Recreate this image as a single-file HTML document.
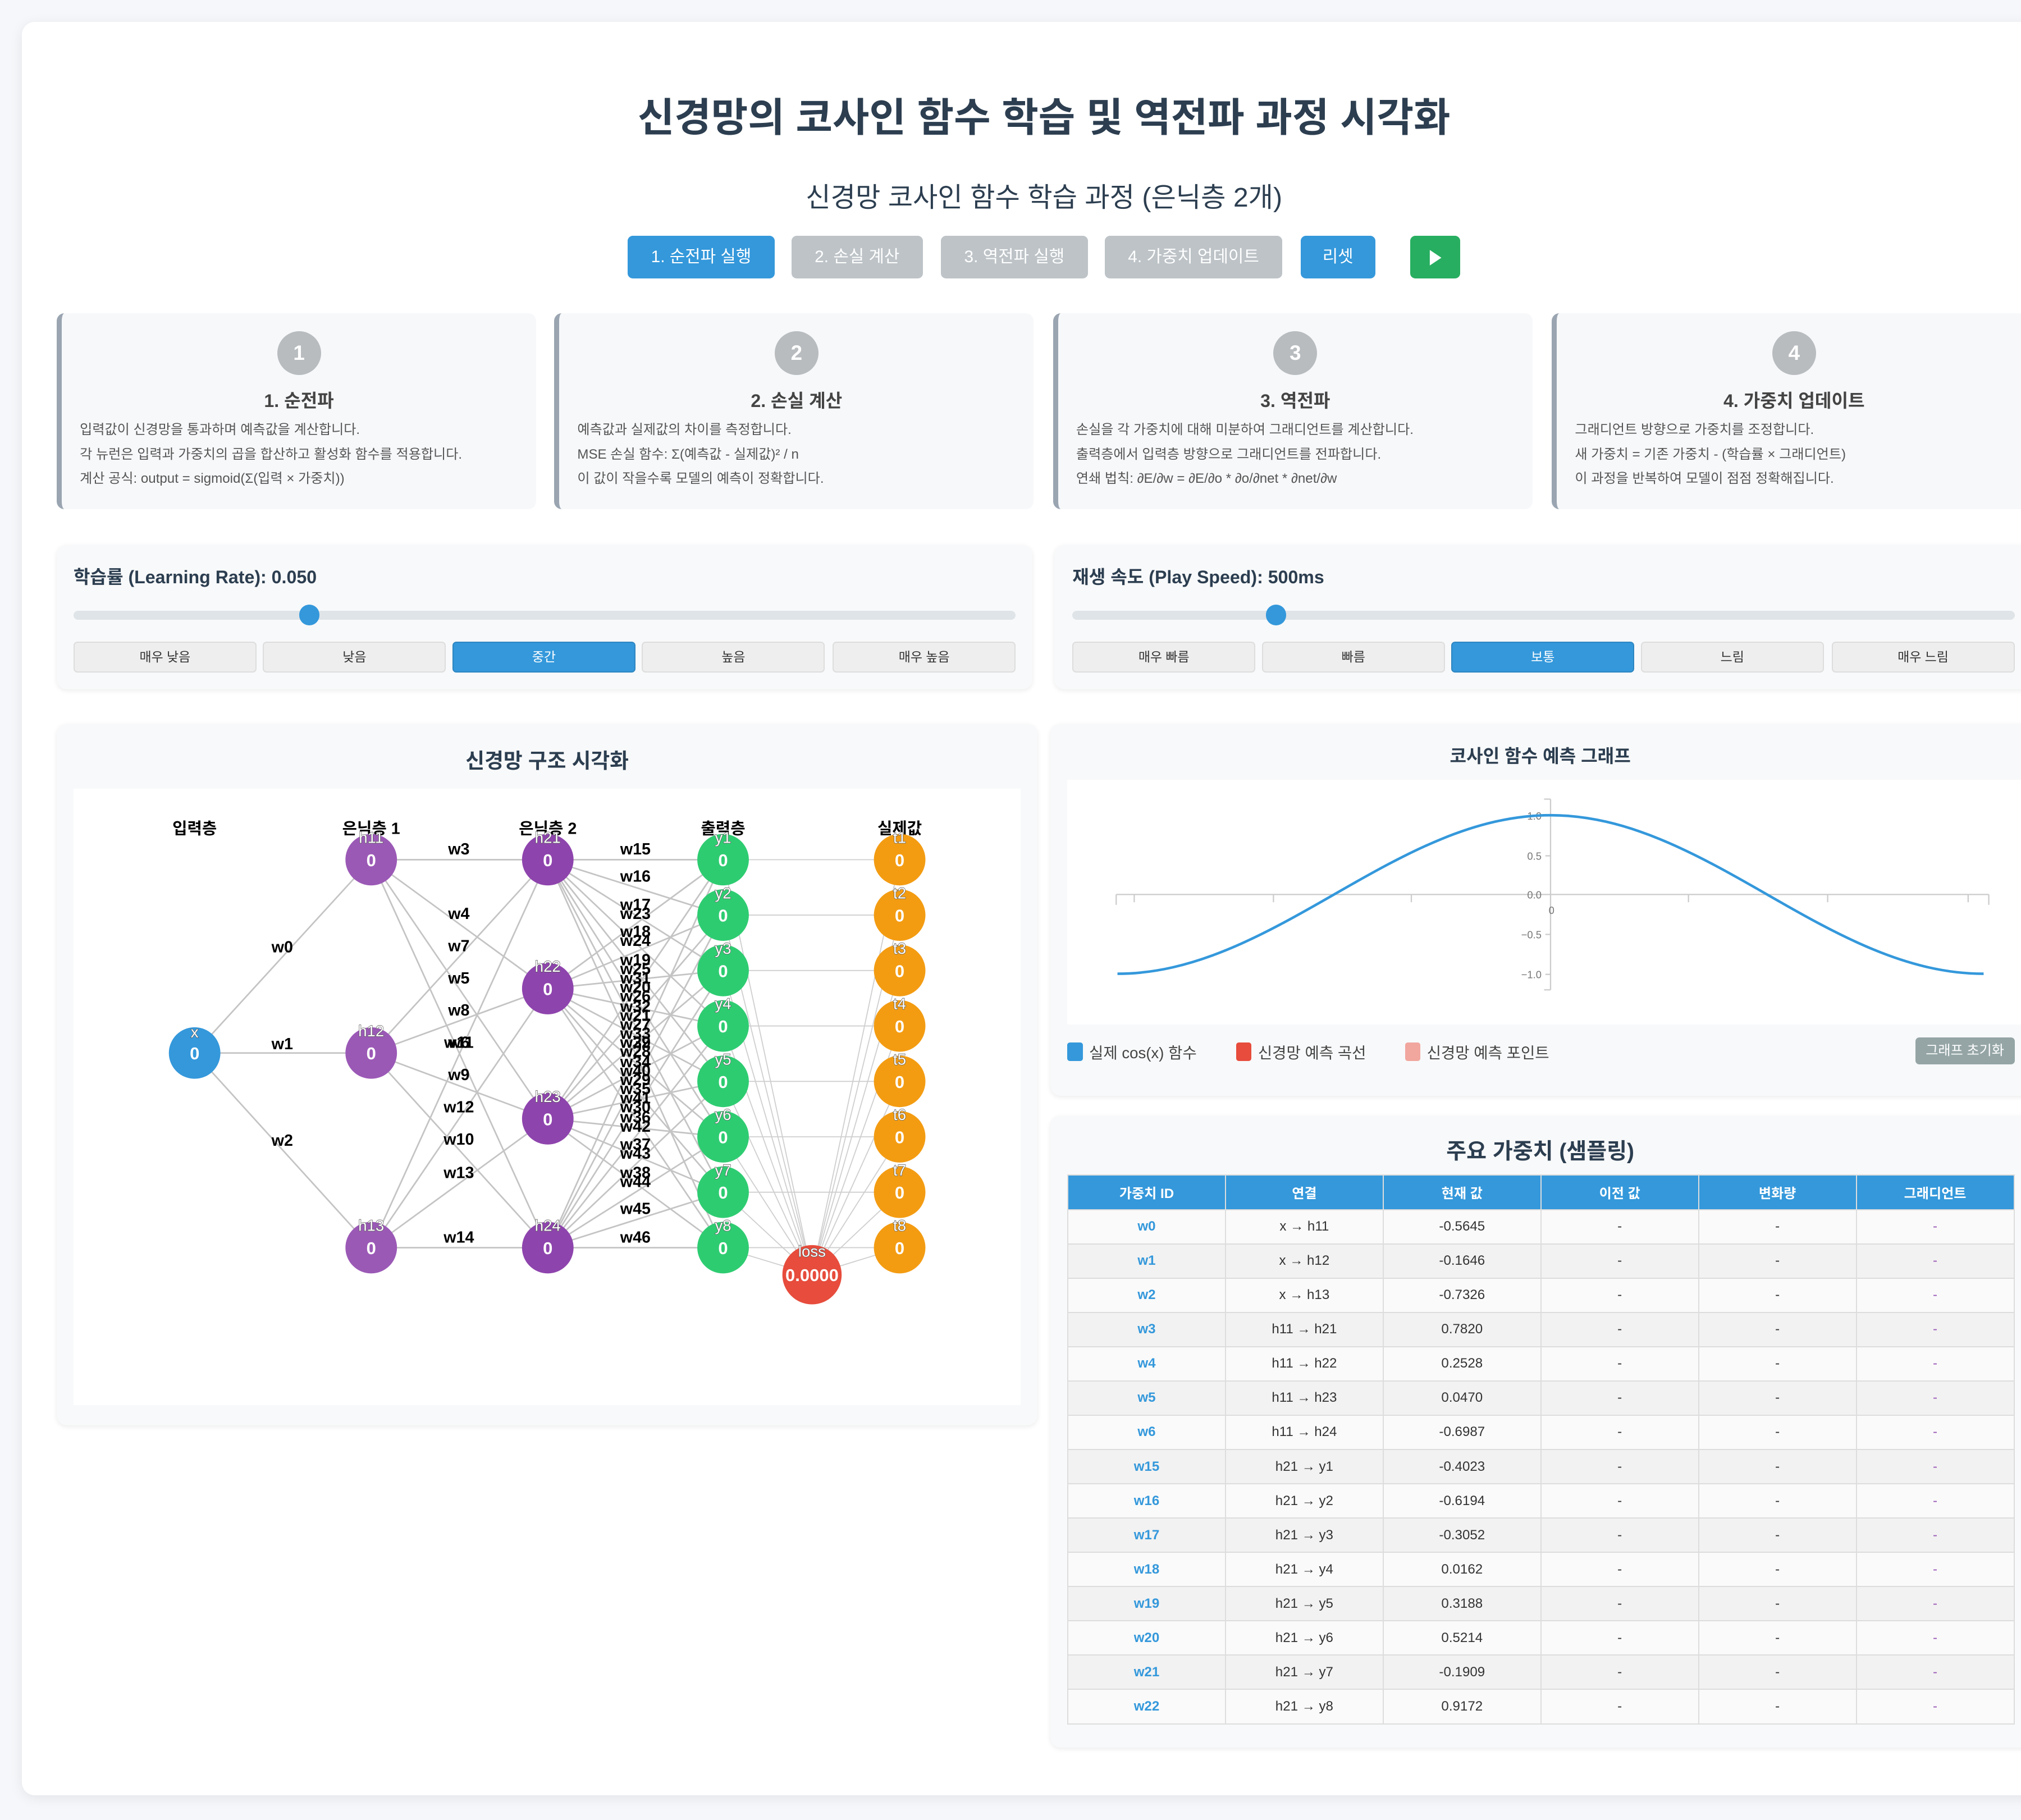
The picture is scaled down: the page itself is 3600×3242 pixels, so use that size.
<!DOCTYPE html>
<html><head><meta charset="utf-8">
<style>
html{zoom:2.29592}
*{box-sizing:border-box;margin:0;padding:0}
body{width:1568px;height:1412px;overflow:hidden;background:#f5f7fa;font-family:"Liberation Sans","Noto Sans CJK KR",sans-serif;color:#2c3e50;position:relative}
.abs{position:absolute}
.wrap{left:17px;top:17px;width:1600px;height:1376px;background:#fff;border-radius:10px;box-shadow:0 2px 10px rgba(0,0,0,.08)}
.c{text-align:center}
.btn{top:183px;height:33px;border-radius:4px;color:#fff;font-size:13px;line-height:33px;text-align:center}
.card{top:243px;width:372px;height:152px;background:#f7f8fa;border-left:4px solid #9aa5b1;border-radius:6px}
.num{position:absolute;left:50%;top:14px;width:34px;height:34px;margin-left:-17px;border-radius:50%;background:#b8bcbf;color:#fff;font-weight:bold;font-size:16px;line-height:34px;text-align:center}
.ct{position:absolute;top:57px;width:100%;text-align:center;font-weight:bold;font-size:14px;color:#444}
.cx{position:absolute;left:14px;top:81px;font-size:10.5px;line-height:19px;color:#555}
.panel{background:#f8f9fa;border-radius:8px;box-shadow:0 1px 4px rgba(0,0,0,.08)}
.lbl{font-weight:bold;font-size:14px;color:#2c3e50}
.track{height:7px;background:#dfe4e8;border-radius:4px}
.thumb{width:16px;height:16px;border-radius:50%;background:#3498db}
.sb{top:498px;width:142px;height:24px;background:#eeeeee;border:1px solid #ddd;border-radius:3px;font-size:10px;line-height:22px;text-align:center;color:#333}
.sb.on{background:#3498db;color:#fff;border-color:#2e86c1}
table{border-collapse:collapse;width:735px;font-size:10.5px;table-layout:fixed}
th{background:#3498db;color:#fff;height:27px;border:1px solid #ddd;font-weight:bold;font-size:10.5px}
td{height:26.6px;border:1px solid #ddd;text-align:center;color:#333}
tr:nth-child(odd) td{background:#f2f2f2}
tr:nth-child(even) td{background:#fafafa}
td.id{color:#3498db;font-weight:bold}
td.g{color:#9b59b6}
</style></head><body>
<div class="abs wrap"></div>
<div class="abs c" style="left:17px;width:1586px;top:66px;font-size:31px;font-weight:bold;color:#2c3e50">신경망의 코사인 함수 학습 및 역전파 과정 시각화</div>
<div class="abs c" style="left:17px;width:1586px;top:136px;font-size:21px;color:#2c3e50">신경망 코사인 함수 학습 과정 (은닉층 2개)</div>

<div class="abs btn" style="left:487px;width:114px;background:#3498db">1. 순전파 실행</div>
<div class="abs btn" style="left:614px;width:102px;background:#bdc3c7">2. 손실 계산</div>
<div class="abs btn" style="left:730px;width:114px;background:#bdc3c7">3. 역전파 실행</div>
<div class="abs btn" style="left:857px;width:138px;background:#bdc3c7">4. 가중치 업데이트</div>
<div class="abs btn" style="left:1009px;width:58px;background:#3498db">리셋</div>
<div class="abs btn" style="left:1094px;width:39px;background:#27ae60"><svg width="14" height="14" viewBox="0 0 14 14" style="margin-top:10px"><path d="M3 1 L12 7 L3 13 Z" fill="#fff"/></svg></div>

<div class="abs card" style="left:44px"><div class="num">1</div><div class="ct">1. 순전파</div><div class="cx">입력값이 신경망을 통과하며 예측값을 계산합니다.<br>각 뉴런은 입력과 가중치의 곱을 합산하고 활성화 함수를 적용합니다.<br>계산 공식: output = sigmoid(Σ(입력 × 가중치))</div></div>
<div class="abs card" style="left:430px"><div class="num">2</div><div class="ct">2. 손실 계산</div><div class="cx">예측값과 실제값의 차이를 측정합니다.<br>MSE 손실 함수: Σ(예측값 - 실제값)² / n<br>이 값이 작을수록 모델의 예측이 정확합니다.</div></div>
<div class="abs card" style="left:817px"><div class="num">3</div><div class="ct">3. 역전파</div><div class="cx">손실을 각 가중치에 대해 미분하여 그래디언트를 계산합니다.<br>출력층에서 입력층 방향으로 그래디언트를 전파합니다.<br>연쇄 법칙: ∂E/∂w = ∂E/∂o * ∂o/∂net * ∂net/∂w</div></div>
<div class="abs card" style="left:1204px"><div class="num">4</div><div class="ct">4. 가중치 업데이트</div><div class="cx">그래디언트 방향으로 가중치를 조정합니다.<br>새 가중치 = 기존 가중치 - (학습률 × 그래디언트)<br>이 과정을 반복하여 모델이 점점 정확해집니다.</div></div>

<div class="abs panel" style="left:44px;top:423px;width:757px;height:112px"></div>
<div class="abs lbl" style="left:57px;top:437px">학습률 (Learning Rate): 0.050</div>
<div class="abs track" style="left:57px;top:474px;width:731px"></div>
<div class="abs thumb" style="left:232px;top:469px"></div>
<div class="abs sb" style="left:57px">매우 낮음</div><div class="abs sb" style="left:204px">낮음</div><div class="abs sb on" style="left:351px">중간</div><div class="abs sb" style="left:498px">높음</div><div class="abs sb" style="left:646px">매우 높음</div>

<div class="abs panel" style="left:818px;top:423px;width:780px;height:112px"></div>
<div class="abs lbl" style="left:832px;top:437px">재생 속도 (Play Speed): 500ms</div>
<div class="abs track" style="left:832px;top:474px;width:731px"></div>
<div class="abs thumb" style="left:982px;top:469px"></div>
<div class="abs sb" style="left:832px">매우 빠름</div><div class="abs sb" style="left:979px">빠름</div><div class="abs sb on" style="left:1126px">보통</div><div class="abs sb" style="left:1273px">느림</div><div class="abs sb" style="left:1421px">매우 느림</div>

<div class="abs panel" style="left:44px;top:562px;width:761px;height:544px"></div>
<div class="abs c lbl" style="left:44px;width:761px;top:577px;font-size:16px">신경망 구조 시각화</div>
<div class="abs" style="left:57px;top:612px;width:735px;height:478px;background:#fff"></div>

<div class="abs panel" style="left:815px;top:562px;width:790px;height:288px"></div>
<div class="abs c lbl" style="left:815px;width:760px;top:576px;font-size:14px">코사인 함수 예측 그래프</div>
<div class="abs" style="left:828px;top:605px;width:740px;height:190px;background:#fff"></div>
<div class="abs" style="left:828px;top:809px;width:12px;height:14px;background:#3498db;border-radius:2px"></div>
<div class="abs" style="left:845px;top:807px;font-size:12px;color:#444">실제 cos(x) 함수</div>
<div class="abs" style="left:959px;top:809px;width:12px;height:14px;background:#e74c3c;border-radius:2px"></div>
<div class="abs" style="left:976px;top:807px;font-size:12px;color:#444">신경망 예측 곡선</div>
<div class="abs" style="left:1090px;top:809px;width:12px;height:14px;background:#f1a69e;border-radius:2px"></div>
<div class="abs" style="left:1107px;top:807px;font-size:12px;color:#444">신경망 예측 포인트</div>
<div class="abs c" style="left:1486px;top:805px;width:77px;height:21px;background:#95a5a6;border-radius:3px;color:#fff;font-size:10.5px;line-height:21px">그래프 초기화</div>

<div class="abs panel" style="left:815px;top:866px;width:790px;height:490px"></div>
<div class="abs c lbl" style="left:815px;width:760px;top:880px;font-size:17px">주요 가중치 (샘플링)</div>
<div class="abs" style="left:828px;top:911px">
<table>
<tr><th>가중치 ID</th><th>연결</th><th>현재 값</th><th>이전 값</th><th>변화량</th><th>그래디언트</th></tr>
<tr><td class="id">w0</td><td>x → h11</td><td>-0.5645</td><td>-</td><td>-</td><td class="g">-</td></tr>
<tr><td class="id">w1</td><td>x → h12</td><td>-0.1646</td><td>-</td><td>-</td><td class="g">-</td></tr>
<tr><td class="id">w2</td><td>x → h13</td><td>-0.7326</td><td>-</td><td>-</td><td class="g">-</td></tr>
<tr><td class="id">w3</td><td>h11 → h21</td><td>0.7820</td><td>-</td><td>-</td><td class="g">-</td></tr>
<tr><td class="id">w4</td><td>h11 → h22</td><td>0.2528</td><td>-</td><td>-</td><td class="g">-</td></tr>
<tr><td class="id">w5</td><td>h11 → h23</td><td>0.0470</td><td>-</td><td>-</td><td class="g">-</td></tr>
<tr><td class="id">w6</td><td>h11 → h24</td><td>-0.6987</td><td>-</td><td>-</td><td class="g">-</td></tr>
<tr><td class="id">w15</td><td>h21 → y1</td><td>-0.4023</td><td>-</td><td>-</td><td class="g">-</td></tr>
<tr><td class="id">w16</td><td>h21 → y2</td><td>-0.6194</td><td>-</td><td>-</td><td class="g">-</td></tr>
<tr><td class="id">w17</td><td>h21 → y3</td><td>-0.3052</td><td>-</td><td>-</td><td class="g">-</td></tr>
<tr><td class="id">w18</td><td>h21 → y4</td><td>0.0162</td><td>-</td><td>-</td><td class="g">-</td></tr>
<tr><td class="id">w19</td><td>h21 → y5</td><td>0.3188</td><td>-</td><td>-</td><td class="g">-</td></tr>
<tr><td class="id">w20</td><td>h21 → y6</td><td>0.5214</td><td>-</td><td>-</td><td class="g">-</td></tr>
<tr><td class="id">w21</td><td>h21 → y7</td><td>-0.1909</td><td>-</td><td>-</td><td class="g">-</td></tr>
<tr><td class="id">w22</td><td>h21 → y8</td><td>0.9172</td><td>-</td><td>-</td><td class="g">-</td></tr>
</table></div>

<svg class="abs" style="left:0;top:0" width="1568" height="1412" viewBox="0 0 1568 1412" font-family="Liberation Sans, Noto Sans CJK KR, sans-serif">
<g stroke="#ccc" stroke-width="1" fill="none">
<path d="M866 694 H1543 M866 694v8 M1543 694v8 M880 694v6 M988 694v6 M1095 694v6 M1310 694v6 M1418 694v6 M1527 694v6"/>
<path d="M1203 620 V768 M1198 620h5 M1198 768h5 M1199 633h4 M1199 664h4 M1199 725h4 M1199 756h4"/>
</g>
<g font-size="8" fill="#777" text-anchor="end">
<text x="1196" y="636">1.0</text><text x="1196" y="667">0.5</text><text x="1196" y="697">0.0</text><text x="1196" y="728">−0.5</text><text x="1196" y="759">−1.0</text>
<text x="1206" y="709">0</text></g>
<path fill="none" stroke="#3498db" stroke-width="2" d="M867 755.5 C926 755.5 978.8 726.3 1035 694 C1091.2 661.7 1144 632.5 1203 632.5 C1262 632.5 1314.8 661.7 1371 694 C1427.2 726.3 1480 755.5 1539 755.5"/>

<g stroke="#c4c4c4" stroke-width="1.2">
<line x1="151" y1="817" x2="288" y2="667"/><line x1="151" y1="817" x2="288" y2="817"/><line x1="151" y1="817" x2="288" y2="968"/>
<line x1="288" y1="667" x2="425" y2="667"/><line x1="288" y1="667" x2="425" y2="767"/><line x1="288" y1="667" x2="425" y2="868"/><line x1="288" y1="667" x2="425" y2="968"/>
<line x1="288" y1="817" x2="425" y2="667"/><line x1="288" y1="817" x2="425" y2="767"/><line x1="288" y1="817" x2="425" y2="868"/><line x1="288" y1="817" x2="425" y2="968"/>
<line x1="288" y1="968" x2="425" y2="667"/><line x1="288" y1="968" x2="425" y2="767"/><line x1="288" y1="968" x2="425" y2="868"/><line x1="288" y1="968" x2="425" y2="968"/>
<line x1="425" y1="667" x2="561" y2="667"/><line x1="425" y1="667" x2="561" y2="710"/><line x1="425" y1="667" x2="561" y2="753"/><line x1="425" y1="667" x2="561" y2="796"/><line x1="425" y1="667" x2="561" y2="839"/><line x1="425" y1="667" x2="561" y2="882"/><line x1="425" y1="667" x2="561" y2="925"/><line x1="425" y1="667" x2="561" y2="968"/>
<line x1="425" y1="767" x2="561" y2="667"/><line x1="425" y1="767" x2="561" y2="710"/><line x1="425" y1="767" x2="561" y2="753"/><line x1="425" y1="767" x2="561" y2="796"/><line x1="425" y1="767" x2="561" y2="839"/><line x1="425" y1="767" x2="561" y2="882"/><line x1="425" y1="767" x2="561" y2="925"/><line x1="425" y1="767" x2="561" y2="968"/>
<line x1="425" y1="868" x2="561" y2="667"/><line x1="425" y1="868" x2="561" y2="710"/><line x1="425" y1="868" x2="561" y2="753"/><line x1="425" y1="868" x2="561" y2="796"/><line x1="425" y1="868" x2="561" y2="839"/><line x1="425" y1="868" x2="561" y2="882"/><line x1="425" y1="868" x2="561" y2="925"/><line x1="425" y1="868" x2="561" y2="968"/>
<line x1="425" y1="968" x2="561" y2="667"/><line x1="425" y1="968" x2="561" y2="710"/><line x1="425" y1="968" x2="561" y2="753"/><line x1="425" y1="968" x2="561" y2="796"/><line x1="425" y1="968" x2="561" y2="839"/><line x1="425" y1="968" x2="561" y2="882"/><line x1="425" y1="968" x2="561" y2="925"/><line x1="425" y1="968" x2="561" y2="968"/>
</g>
<g stroke="#cfcfcf" stroke-width="0.8">
<line x1="561" y1="667" x2="698" y2="667"/><line x1="561" y1="710" x2="698" y2="710"/><line x1="561" y1="753" x2="698" y2="753"/><line x1="561" y1="796" x2="698" y2="796"/><line x1="561" y1="839" x2="698" y2="839"/><line x1="561" y1="882" x2="698" y2="882"/><line x1="561" y1="925" x2="698" y2="925"/><line x1="561" y1="968" x2="698" y2="968"/>
<line x1="561" y1="667" x2="630" y2="989"/><line x1="561" y1="710" x2="630" y2="989"/><line x1="561" y1="753" x2="630" y2="989"/><line x1="561" y1="796" x2="630" y2="989"/><line x1="561" y1="839" x2="630" y2="989"/><line x1="561" y1="882" x2="630" y2="989"/><line x1="561" y1="925" x2="630" y2="989"/><line x1="561" y1="968" x2="630" y2="989"/>
<line x1="698" y1="667" x2="630" y2="989"/><line x1="698" y1="710" x2="630" y2="989"/><line x1="698" y1="753" x2="630" y2="989"/><line x1="698" y1="796" x2="630" y2="989"/><line x1="698" y1="839" x2="630" y2="989"/><line x1="698" y1="882" x2="630" y2="989"/><line x1="698" y1="925" x2="630" y2="989"/><line x1="698" y1="968" x2="630" y2="989"/>
</g>

<g font-size="12.5" font-weight="bold" fill="#000" text-anchor="middle">
<text x="219" y="739">w0</text><text x="219" y="814">w1</text><text x="219" y="889">w2</text>
<text x="356" y="663">w3</text><text x="356" y="713">w4</text><text x="356" y="763">w5</text><text x="356" y="813">w6</text>
<text x="356" y="738">w7</text><text x="356" y="788">w8</text><text x="356" y="838">w9</text><text x="356" y="888">w10</text>
<text x="356" y="813">w11</text><text x="356" y="863">w12</text><text x="356" y="914">w13</text><text x="356" y="964">w14</text>
<text x="493" y="663">w15</text><text x="493" y="684">w16</text><text x="493" y="706">w17</text><text x="493" y="727">w18</text><text x="493" y="749">w19</text><text x="493" y="770">w20</text><text x="493" y="792">w21</text><text x="493" y="813">w22</text>
<text x="493" y="713">w23</text><text x="493" y="734">w24</text><text x="493" y="756">w25</text><text x="493" y="777">w26</text><text x="493" y="799">w27</text><text x="493" y="820">w28</text><text x="493" y="842">w29</text><text x="493" y="863">w30</text>
<text x="493" y="763">w31</text><text x="493" y="785">w32</text><text x="493" y="806">w33</text><text x="493" y="828">w34</text><text x="493" y="849">w35</text><text x="493" y="871">w36</text><text x="493" y="892">w37</text><text x="493" y="914">w38</text>
<text x="493" y="813">w39</text><text x="493" y="835">w40</text><text x="493" y="856">w41</text><text x="493" y="878">w42</text><text x="493" y="899">w43</text><text x="493" y="921">w44</text><text x="493" y="942">w45</text><text x="493" y="964">w46</text>
</g>
<g font-size="12.5" font-weight="bold" fill="#000" text-anchor="middle">
<text x="151" y="647">입력층</text><text x="288" y="647">은닉층 1</text><text x="425" y="647">은닉층 2</text><text x="561" y="647">출력층</text><text x="698" y="647">실제값</text>
</g>
<g>
<circle cx="151" cy="817" r="20" fill="#3498db"/>
<circle cx="288" cy="667" r="20" fill="#9b59b6"/><circle cx="288" cy="817" r="20" fill="#9b59b6"/><circle cx="288" cy="968" r="20" fill="#9b59b6"/>
<circle cx="425" cy="667" r="20" fill="#8e44ad"/><circle cx="425" cy="767" r="20" fill="#8e44ad"/><circle cx="425" cy="868" r="20" fill="#8e44ad"/><circle cx="425" cy="968" r="20" fill="#8e44ad"/>
<g fill="#2ecc71"><circle cx="561" cy="667" r="20"/><circle cx="561" cy="710" r="20"/><circle cx="561" cy="753" r="20"/><circle cx="561" cy="796" r="20"/><circle cx="561" cy="839" r="20"/><circle cx="561" cy="882" r="20"/><circle cx="561" cy="925" r="20"/><circle cx="561" cy="968" r="20"/></g>
<g fill="#f39c12"><circle cx="698" cy="667" r="20"/><circle cx="698" cy="710" r="20"/><circle cx="698" cy="753" r="20"/><circle cx="698" cy="796" r="20"/><circle cx="698" cy="839" r="20"/><circle cx="698" cy="882" r="20"/><circle cx="698" cy="925" r="20"/><circle cx="698" cy="968" r="20"/></g>
<circle cx="630" cy="989" r="23" fill="#e74c3c"/>
</g>
<g font-size="13.5" font-weight="bold" fill="#fff" text-anchor="middle">
<text x="151" y="822">0</text>
<text x="288" y="672">0</text><text x="288" y="822">0</text><text x="288" y="973">0</text>
<text x="425" y="672">0</text><text x="425" y="772">0</text><text x="425" y="873">0</text><text x="425" y="973">0</text>
<text x="561" y="672">0</text><text x="561" y="715">0</text><text x="561" y="758">0</text><text x="561" y="801">0</text><text x="561" y="844">0</text><text x="561" y="887">0</text><text x="561" y="930">0</text><text x="561" y="973">0</text>
<text x="698" y="672">0</text><text x="698" y="715">0</text><text x="698" y="758">0</text><text x="698" y="801">0</text><text x="698" y="844">0</text><text x="698" y="887">0</text><text x="698" y="930">0</text><text x="698" y="973">0</text>
<text x="630" y="994">0.0000</text>
</g>
<g font-size="12" fill="#fff" stroke="#555" stroke-width="0.6" paint-order="stroke" text-anchor="middle">
<text x="151" y="805">x</text>
<text x="288" y="654">h11</text><text x="288" y="804">h12</text><text x="288" y="955">h13</text>
<text x="425" y="654">h21</text><text x="425" y="754">h22</text><text x="425" y="855">h23</text><text x="425" y="955">h24</text>
<text x="561" y="654">y1</text><text x="561" y="697">y2</text><text x="561" y="740">y3</text><text x="561" y="783">y4</text><text x="561" y="826">y5</text><text x="561" y="869">y6</text><text x="561" y="912">y7</text><text x="561" y="955">y8</text>
<text x="698" y="654">t1</text><text x="698" y="697">t2</text><text x="698" y="740">t3</text><text x="698" y="783">t4</text><text x="698" y="826">t5</text><text x="698" y="869">t6</text><text x="698" y="912">t7</text><text x="698" y="955">t8</text>
<text x="630" y="975">loss</text>
</g>
</svg>
</body></html>
